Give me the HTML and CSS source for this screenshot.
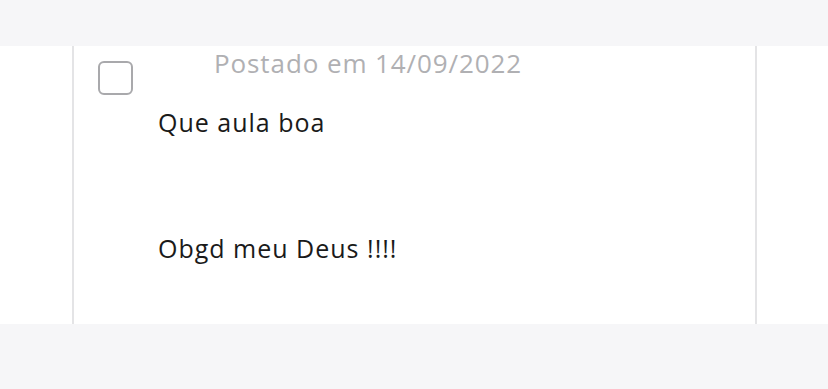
FILE: index.html
```html
<!DOCTYPE html>
<html lang="pt-br">
<head>
    <meta charset="UTF-8">
    <title>Comentário</title>
    <meta name="viewport" content="width=device-width, initial-scale=1">
    <link rel="stylesheet" href="styles.css">
</head>
<body>
    <div class="topo"></div>
    <div class="conteudo">
        <div class="coluna">
            <div class="comentario">
                <span class="caixa"></span>
                <div class="texto">
                    <div class="data">Postado em 14/09/2022</div>
                    <p>Que aula boa</p>
                    <p class="fim">Obgd meu Deus !!!!</p>
                </div>
            </div>
        </div>
    </div>
    <div class="rodape"></div>
</body>
</html>
```

FILE: styles.css
```css
body {
    margin: 0;
    padding: 0;
    background: #f6f6f8;
    font-family: 'Open Sans', Arial, sans-serif;
    color: #1a1a1a;
}
.topo {
    height: 46px;
}
.conteudo {
    background: #fff;
    height: 278px;
}
.coluna {
    margin-left: 72px;
    width: 681px;
    height: 100%;
    border-left: 2px solid #e4e4e6;
    border-right: 2px solid #e4e4e6;
}
.comentario {
    display: flex;
    padding: 1px 0 0 24px;
    gap: 25px;
}
.caixa {
    flex: none;
    width: 31px;
    height: 30px;
    margin-top: 14px;
    border: 2px solid #a9a9ac;
    border-radius: 6px;
}
.data {
    color: #b0b0b3;
    font-size: 26px;
    letter-spacing: 0.9px;
    margin-left: 56px;
    line-height: 32px;
}
.texto p {
    margin: 28px 0 0 0;
    font-size: 25px;
    letter-spacing: 1px;
    line-height: 30px;
}
.texto p.fim {
    margin-top: 96px;
}
```
